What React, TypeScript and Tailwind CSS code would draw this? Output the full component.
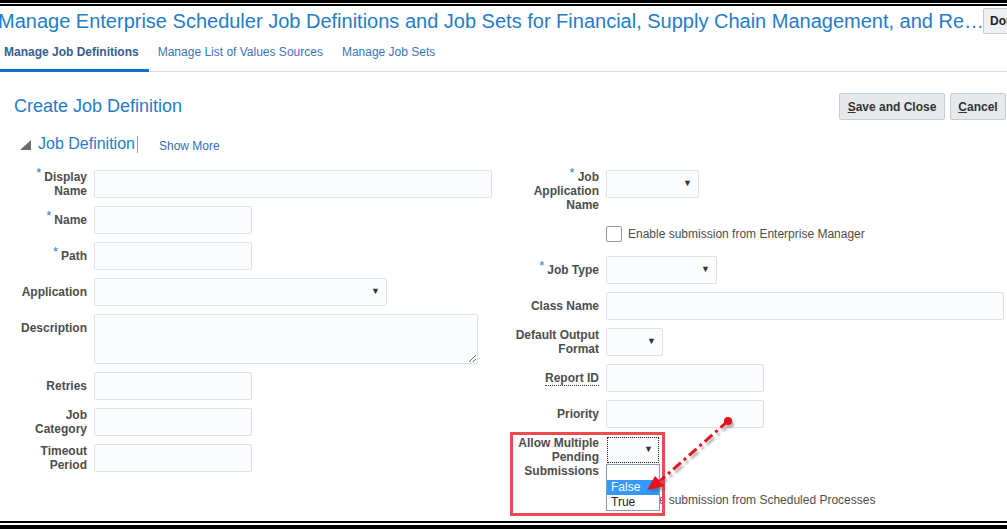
import React from "react";

const label = "text-[12px] font-bold leading-[14px] text-[#4d4d4d] text-right";
const field = "h-[28px] rounded-[2px] border border-[#dde2e6] bg-[#fbfcfd]";

function Req() {
  return <span className="relative -top-[4px] mr-[3px] text-[13px] font-normal text-[#2a7cc7]">*</span>;
}

function Select({ w }: { w: string }) {
  return (
    <div className={`${field} ${w} flex items-center justify-end pr-[6px]`}>
      <span className="text-[9px] text-[#333]">▼</span>
    </div>
  );
}

function Row({
  labelW,
  children,
  text,
}: {
  labelW: string;
  children: React.ReactNode;
  text: React.ReactNode;
}) {
  return (
    <div className="flex items-start gap-[7px]">
      <div className={`${labelW} flex min-h-[28px] shrink-0 items-center justify-end ${label}`}>
        <div>{text}</div>
      </div>
      {children}
    </div>
  );
}

function Checkbox({ children }: { children: React.ReactNode }) {
  return (
    <div className="flex h-[28px] items-center gap-[6px] pl-[106px]">
      <div className="h-[16px] w-[16px] rounded-[2px] border border-[#8e9ba6] bg-white" />
      <span className="text-[12px] text-[#4d4d4d]">{children}</span>
    </div>
  );
}

export default function App() {
  return (
    <div className="relative flex h-[529px] w-[1007px] flex-col overflow-hidden bg-white font-['Liberation_Sans',Arial,sans-serif]">
      <div className="h-[3px] bg-black" />
      <div className="h-px" />
      <div className="h-[2px] bg-black" />

      {/* page header */}
      <div className="mt-px flex h-[28px] items-center overflow-hidden">
        <div className="ml-[-2px] w-[985px] shrink-0 overflow-hidden whitespace-nowrap text-[20px] leading-[28px] text-[#1f7dc9]">
          Manage Enterprise Scheduler Job Definitions and Job Sets for Financial, Supply Chain Management, and Re…
        </div>
        <div className="flex h-[26px] w-[40px] shrink-0 items-center rounded-[2px] border border-[#c4ccd3] bg-[#eef0f2] pl-[6px] text-[12px] font-bold text-[#222]">
          Done
        </div>
      </div>

      {/* tabs */}
      <div className="flex h-[37px] border-b border-[#d6dfe6] text-[12px]">
        <div className="flex h-[37px] items-center border-b-[3px] border-[#0b72c7] pl-[4px] pr-[10px] font-bold text-[#33608f]">
          Manage Job Definitions
        </div>
        <div className="flex h-[37px] items-center border-b-[3px] border-transparent pl-[9px] pr-[10px] text-[#3a75b9]">
          Manage List of Values Sources
        </div>
        <div className="flex h-[37px] items-center border-b-[3px] border-transparent pl-[9px] text-[#3a75b9]">
          Manage Job Sets
        </div>
      </div>

      {/* title + actions */}
      <div className="mt-[21px] flex h-[27px] items-center justify-between pl-[14px] pr-px">
        <div className="text-[18px] text-[#1f7dc9]">Create Job Definition</div>
        <div className="flex gap-[5px]">
          <div className="flex h-[27px] w-[106px] items-center justify-center rounded-[2px] border border-[#c4ced7] bg-[#e6e9eb] text-[12px] font-bold text-[#333]">
            <span className="underline">S</span>ave and Close
          </div>
          <div className="flex h-[27px] w-[56px] items-center justify-center rounded-[2px] border border-[#c4ced7] bg-[#e6e9eb] text-[12px] font-bold text-[#333]">
            <span className="underline">C</span>ancel
          </div>
        </div>
      </div>

      {/* section header */}
      <div className="mt-[12px] flex h-[24px] items-center pl-[20px]">
        <svg width="12" height="11" viewBox="0 0 12 11" className="mt-[2px]">
          <path d="M11 0 L11 10 L0 10 Z" fill="#6b6b6b" />
        </svg>
        <span className="ml-[6px] text-[16px] text-[#1f7dc9]">Job Definition</span>
        <span className="ml-[2px] h-[17px] w-px bg-[#9a9a9a]" />
        <span className="ml-[21px] mt-[3px] text-[12px] text-[#2f6fb5]">Show More</span>
      </div>

      {/* form */}
      <div className="mt-[14px] flex">
        <div className="flex w-[500px] shrink-0 flex-col gap-[8px]">
          <Row labelW="w-[87px]" text={<><Req />Display<br />Name</>}>
            <div className={`${field} w-[398px]`} />
          </Row>
          <Row labelW="w-[87px]" text={<><Req />Name</>}>
            <div className={`${field} w-[158px]`} />
          </Row>
          <Row labelW="w-[87px]" text={<><Req />Path</>}>
            <div className={`${field} w-[158px]`} />
          </Row>
          <Row labelW="w-[87px]" text="Application">
            <Select w="w-[293px]" />
          </Row>
          <Row labelW="w-[87px]" text="Description">
            <textarea className="h-[50px] w-[384px] rounded-[2px] border border-[#dde2e6] bg-[#fbfcfd]" />
          </Row>
          <Row labelW="w-[87px]" text="Retries">
            <div className={`${field} w-[158px]`} />
          </Row>
          <Row labelW="w-[87px]" text={<>Job<br />Category</>}>
            <div className={`${field} w-[158px]`} />
          </Row>
          <Row labelW="w-[87px]" text={<>Timeout<br />Period</>}>
            <div className={`${field} w-[158px]`} />
          </Row>
        </div>

        <div className="flex flex-1 flex-col gap-[8px]">
          <Row labelW="w-[99px]" text={<><Req />Job<br />Application<br />Name</>}>
            <Select w="w-[93px]" />
          </Row>
          <Checkbox>Enable submission from Enterprise Manager</Checkbox>
          <Row labelW="w-[99px]" text={<><Req />Job Type</>}>
            <Select w="w-[111px]" />
          </Row>
          <Row labelW="w-[99px]" text="Class Name">
            <div className={`${field} w-[398px]`} />
          </Row>
          <Row labelW="w-[99px]" text={<>Default Output<br />Format</>}>
            <Select w="w-[57px]" />
          </Row>
          <Row
            labelW="w-[99px]"
            text={<span className="border-b border-dotted border-[#333]">Report ID</span>}
          >
            <div className={`${field} w-[158px]`} />
          </Row>
          <Row labelW="w-[99px]" text="Priority">
            <div className={`${field} w-[158px]`} />
          </Row>
          <Row labelW="w-[99px]" text={<>Allow Multiple<br />Pending<br />Submissions</>}>
            <div className="ml-px mt-px flex h-[26px] w-[52px] items-center justify-end border border-dotted border-[#222] bg-[#fbfcfd] pr-[5px]">
              <span className="text-[9px] text-[#333]">▼</span>
            </div>
          </Row>
          <Checkbox>Enable submission from Scheduled Processes</Checkbox>
        </div>
      </div>

      <div className="mt-auto h-[2px] bg-black" />
      <div className="h-[2px]" />
      <div className="h-[4px] bg-black" />

      {/* open listbox */}
      <div className="absolute left-[606px] top-[464px] w-[54px] border border-[#7f9db9] bg-white text-[12px] leading-[15px]">
        <div className="h-[15px]" />
        <div className="bg-[#3399ff] pl-[4px] text-white">False</div>
        <div className="pl-[4px] text-[#222]">True</div>
      </div>

      {/* annotation box */}
      <div className="absolute left-[510px] top-[432px] h-[84px] w-[155px] border-[3px] border-[#ef4a4e]" />

      {/* annotation arrow */}
      <svg className="absolute left-0 top-0" width="1007" height="529" viewBox="0 0 1007 529">
        <defs>
          <filter id="sh" x="-20%" y="-20%" width="140%" height="140%">
            <feGaussianBlur stdDeviation="1.2" />
          </filter>
        </defs>
        <g transform="translate(2 3)" opacity="0.45" filter="url(#sh)">
          <line x1="728" y1="421" x2="660" y2="481" stroke="#555" strokeWidth="3" strokeDasharray="10 4 3 4" />
          <circle cx="728" cy="421" r="4" fill="#555" />
          <path d="M647 490 L655 476 L665 486 Z" fill="#555" />
        </g>
        <line x1="728" y1="421" x2="660" y2="481" stroke="#e8101a" strokeWidth="3" strokeDasharray="10 4 3 4" />
        <circle cx="728" cy="421" r="4" fill="#e8101a" />
        <path d="M647 490 L655 476 L665 486 Z" fill="#e8101a" />
      </svg>
    </div>
  );
}
